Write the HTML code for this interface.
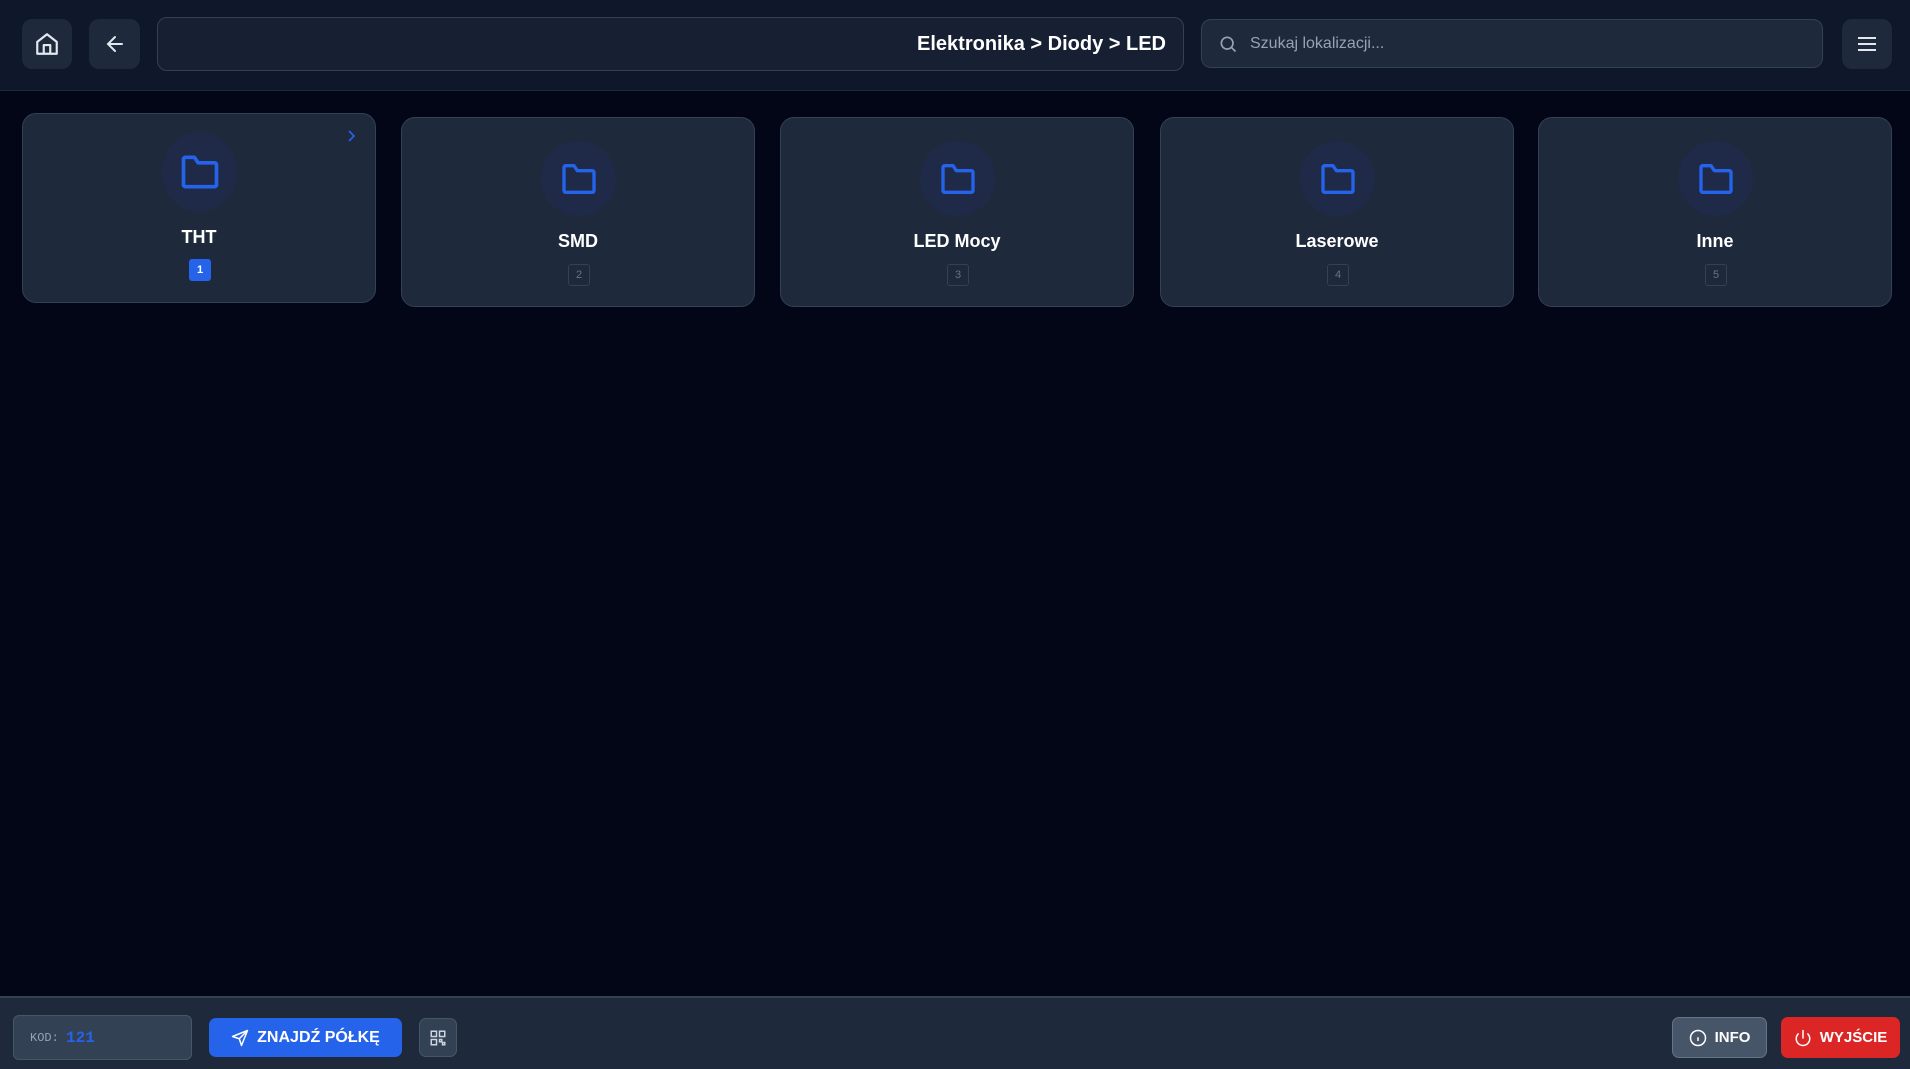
<!DOCTYPE html>
<html><head><meta charset="utf-8"><style>
*{box-sizing:border-box;margin:0;padding:0}
body{width:1910px;height:1069px;background:#020617;font-family:"Liberation Sans",sans-serif;color:#fff;position:relative;overflow:hidden}
.hdr{position:absolute;left:0;top:0;width:1910px;height:91px;background:#0f172a;border-bottom:1px solid #1e293b}
.ib{position:absolute;background:#1e293b;border-radius:10px;display:flex;align-items:center;justify-content:center}
.bc{position:absolute;left:157px;top:17px;width:1027px;height:54px;background:#172033;border:1px solid #334155;border-radius:10px;display:flex;align-items:center;justify-content:flex-end;padding-right:17px;font-weight:bold;font-size:20px}
.srch{position:absolute;left:1201px;top:19px;width:622px;height:49px;background:#1e293b;border:1px solid #334155;border-radius:10px;display:flex;align-items:center;padding-left:48px;font-size:16px;color:#94a3b8}
.card{position:absolute;width:354px;height:190px;background:#1e293b;border:1px solid #334155;border-radius:14px}
.circ{position:absolute;left:139px;top:23px;width:75px;height:75px;border-radius:50%;background:#1e2a47;display:flex;align-items:center;justify-content:center}
.lbl{position:absolute;left:0;width:100%;top:113px;text-align:center;font-weight:bold;font-size:18px}
.bdg{position:absolute;left:166px;top:146px;width:22px;height:22px;border:1px solid #334155;border-radius:3px;font-size:11px;color:#64748b;display:flex;align-items:center;justify-content:center}
.ftr{position:absolute;left:0;top:996px;width:1910px;height:73px;background:#1e293b;border-top:2px solid #334155}
.btn{position:absolute;border-radius:7px;display:flex;align-items:center;justify-content:center;font-weight:bold;font-size:16px;gap:8px}
</style></head><body>
<div class="hdr">
 <div class="ib" style="left:22px;top:19px;width:50px;height:50px"><svg width="26" height="26" viewBox="0 0 24 24" fill="none" stroke="#e2e8f0" stroke-width="2" stroke-linejoin="round"><path d="M3 10l9-7 9 7v11H3z"/><path d="M9 21v-8h6v8"/></svg></div>
 <div class="ib" style="left:89px;top:19px;width:51px;height:50px"><svg width="24" height="24" viewBox="0 0 24 24" fill="none" stroke="#e2e8f0" stroke-width="2" stroke-linecap="round"><path d="M19 12H5M12 5l-7 7 7 7"/></svg></div>
 <div class="bc">Elektronika &gt; Diody &gt; LED</div>
 <div class="srch"><svg style="position:absolute;left:16px;top:14px" width="20" height="20" viewBox="0 0 24 24" fill="none" stroke="#94a3b8" stroke-width="2"><circle cx="11" cy="11" r="7"/><path d="M16 16l5 5"/></svg>Szukaj lokalizacji...</div>
 <div class="ib" style="left:1842px;top:19px;width:50px;height:50px"><svg width="24" height="24" viewBox="0 0 24 24" stroke="#e2e8f0" stroke-width="2"><path d="M3 6h18M3 12h18M3 18h18"/></svg></div>
</div>

<div class="card" style="left:22px;top:113px"><svg style="position:absolute;right:17px;top:14px" width="14" height="16" viewBox="0 0 14 16" fill="none" stroke="#2563eb" stroke-width="1.6"><path d="M5 3l5 5-5 5"/></svg><div class="circ" style="top:18px;height:80px"><svg width="44" height="44" viewBox="0 0 24 24" fill="none" stroke="#2563eb" stroke-width="2" stroke-linejoin="round"><path d="M3 5a1 1 0 0 1 1-1h5l2 3h9a1 1 0 0 1 1 1v11a1 1 0 0 1-1 1H4a1 1 0 0 1-1-1z"/></svg></div><div class="lbl" style="top:113px">THT</div><div class="bdg" style="background:#2563eb;border-color:#2563eb;color:#fff;font-weight:bold;top:145px">1</div></div>
<div class="card" style="left:401px;top:117px"><div class="circ"><svg width="40" height="40" viewBox="0 0 24 24" fill="none" stroke="#2563eb" stroke-width="2" stroke-linejoin="round"><path d="M3 5a1 1 0 0 1 1-1h5l2 3h9a1 1 0 0 1 1 1v11a1 1 0 0 1-1 1H4a1 1 0 0 1-1-1z"/></svg></div><div class="lbl">SMD</div><div class="bdg">2</div></div>
<div class="card" style="left:780px;top:117px"><div class="circ"><svg width="40" height="40" viewBox="0 0 24 24" fill="none" stroke="#2563eb" stroke-width="2" stroke-linejoin="round"><path d="M3 5a1 1 0 0 1 1-1h5l2 3h9a1 1 0 0 1 1 1v11a1 1 0 0 1-1 1H4a1 1 0 0 1-1-1z"/></svg></div><div class="lbl">LED Mocy</div><div class="bdg">3</div></div>
<div class="card" style="left:1160px;top:117px"><div class="circ"><svg width="40" height="40" viewBox="0 0 24 24" fill="none" stroke="#2563eb" stroke-width="2" stroke-linejoin="round"><path d="M3 5a1 1 0 0 1 1-1h5l2 3h9a1 1 0 0 1 1 1v11a1 1 0 0 1-1 1H4a1 1 0 0 1-1-1z"/></svg></div><div class="lbl">Laserowe</div><div class="bdg">4</div></div>
<div class="card" style="left:1538px;top:117px"><div class="circ"><svg width="40" height="40" viewBox="0 0 24 24" fill="none" stroke="#2563eb" stroke-width="2" stroke-linejoin="round"><path d="M3 5a1 1 0 0 1 1-1h5l2 3h9a1 1 0 0 1 1 1v11a1 1 0 0 1-1 1H4a1 1 0 0 1-1-1z"/></svg></div><div class="lbl">Inne</div><div class="bdg">5</div></div>

<div class="ftr">
 <div style="position:absolute;left:13px;top:17px;width:179px;height:45px;background:#334155;border:1px solid #475569;border-radius:6px;display:flex;align-items:center;padding-left:16px;font-family:'Liberation Mono',monospace;font-size:12px;color:#94a3b8">KOD:&nbsp;<span style="color:#2563eb;font-size:16px;font-weight:bold">121</span></div>
 <div class="btn" style="left:209px;top:20px;width:193px;height:39px;background:#2563eb"><svg width="18" height="18" viewBox="0 0 24 24" fill="none" stroke="#fff" stroke-width="2" stroke-linejoin="round"><path d="M22 2L2 10l9 3 3 9z"/><path d="M22 2L11 13"/></svg>ZNAJDŹ PÓŁKĘ</div>
 <div class="btn" style="left:419px;top:20px;width:38px;height:39px;background:#334155;border:1px solid #475569"><svg width="18" height="18" viewBox="0 0 24 24" fill="none" stroke="#cbd5e1" stroke-width="2"><rect x="3" y="3" width="7" height="7"/><rect x="14" y="3" width="7" height="7"/><rect x="3" y="14" width="7" height="7"/><path d="M14 14h3v3h-3zM18 18h3v3h-3z"/></svg></div>
 <div class="btn" style="left:1672px;top:19px;width:95px;height:41px;background:#475569;border:1px solid #64748b;font-size:15px"><svg width="18" height="18" viewBox="0 0 24 24" fill="none" stroke="#fff" stroke-width="2"><circle cx="12" cy="12" r="10"/><path d="M12 16v-5M12 8h.01"/></svg>INFO</div>
 <div class="btn" style="left:1781px;top:19px;width:119px;height:41px;background:#dc2626;font-size:15px"><svg width="18" height="18" viewBox="0 0 24 24" fill="none" stroke="#fff" stroke-width="2" stroke-linecap="round"><path d="M12 2v10"/><path d="M18.4 6.6a9 9 0 1 1-12.8 0"/></svg>WYJŚCIE</div>
</div>
</body></html>
